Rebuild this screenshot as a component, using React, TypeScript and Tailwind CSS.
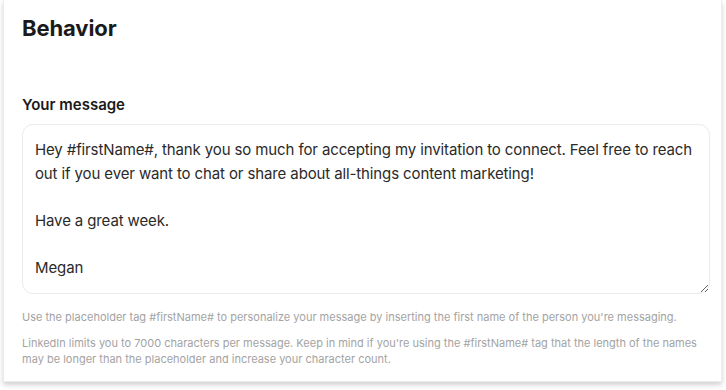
import React from "react";

const message = `Hey #firstName#, thank you so much for accepting my invitation to connect. Feel free to reach out if you ever want to chat or share about all-things content marketing!

Have a great week.

Megan`;

export default function App() {
  return (
    <div className="h-[390px] w-[726px] bg-white" style={{ fontFamily: "Inter, 'Noto Sans', sans-serif" }}>
      <div className="ml-[3px] w-[719px] h-[382px] bg-white border border-[#ececec] border-t-0 shadow-[0_3px_5px_rgba(0,0,0,0.18)] px-[18px] pt-[14px]">
        <h2 className="text-[22px] font-bold text-[#1a1a1a] leading-[28px] tracking-[-0.1px]">Behavior</h2>

        <label className="block mt-[53px] text-[15px] font-semibold text-[#1a1a1a] leading-[20px]">
          Your message
        </label>

        <textarea
          className="mt-[9px] block w-[688px] h-[170px] rounded-[11px] border border-[#ebebeb] px-[12px] pt-[13px] text-[15px] leading-[23.5px] text-[#2a2a2a] outline-none resize-y tracking-[-0.12px]"
          defaultValue={message}
        />

        <div className="mt-[15px] text-[11px] leading-[16px] text-[#a3a3a3] tracking-[0px] flex flex-col gap-[10px]">
          <p>
            Use the placeholder tag #firstName# to personalize your message by inserting the first name of the person you're messaging.
          </p>
          <p>
            LinkedIn limits you to 7000 characters per message. Keep in mind if you're using the #firstName# tag that the length of the names may be longer than the placeholder and increase your character count.
          </p>
        </div>
      </div>
    </div>
  );
}
